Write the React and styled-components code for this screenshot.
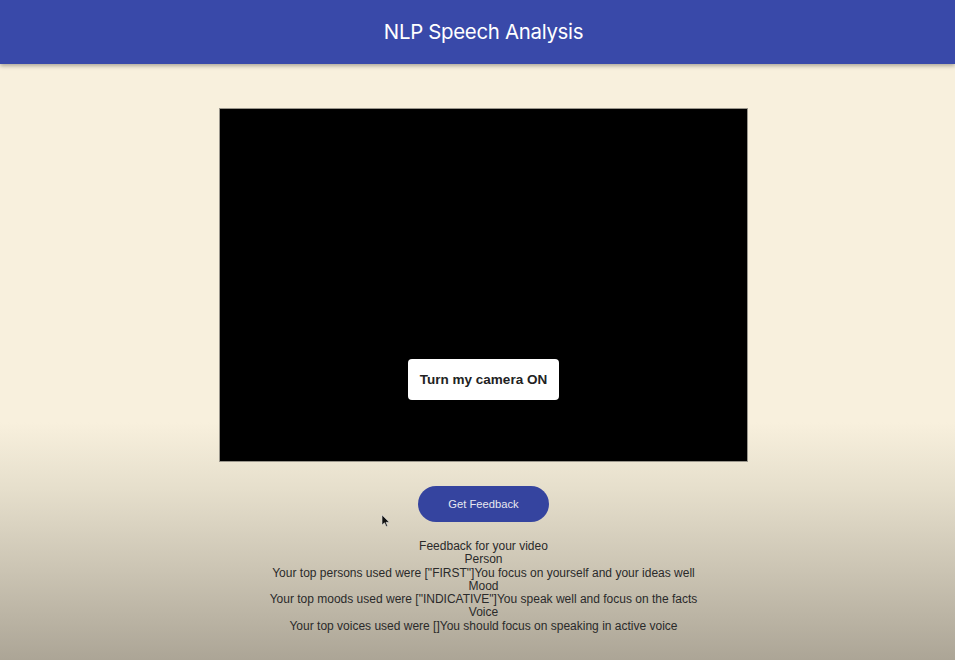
import React from "react";
import styled, { createGlobalStyle } from "styled-components";

const Global = createGlobalStyle`
  html, body { margin: 0; padding: 0; }
  body {
    font-family: "Liberation Sans", Arial, sans-serif;
    background: #f8f0dd;
  }
`;

const Page = styled.div`
  position: relative;
  min-height: 660px;
  background: linear-gradient(
    to bottom,
    #f8f0dd 0%,
    #f8f0dd 64%,
    #e6dfcc 74%,
    #ccc5b4 86%,
    #aca596 100%
  );
  display: flex;
  flex-direction: column;
`;

const Header = styled.header`
  height: 64px;
  padding-left: 12px;
  padding-bottom: 2px;
  box-sizing: border-box;
  background: #3949a9;
  box-shadow: 0 2px 4px rgba(0, 0, 0, 0.3);
  display: flex;
  align-items: center;
  justify-content: center;
`;

const Title = styled.h1`
  margin: 0;
  font-family: Inter, "Liberation Sans", sans-serif;
  font-weight: 400;
  font-size: 20.4px;
  color: #ffffff;
  letter-spacing: -0.3px;
`;

const Main = styled.main`
  display: flex;
  flex-direction: column;
  align-items: center;
  padding-top: 44px;
  padding-left: 12px;
`;

const Video = styled.div`
  width: 527px;
  height: 291px;
  background: #000;
  border: 1px solid #9a968c;
  display: flex;
  flex-direction: column;
  align-items: center;
  justify-content: flex-end;
  padding-bottom: 61px;
  box-sizing: content-box;
`;

const CameraButton = styled.button`
  width: 151px;
  height: 41px;
  background: #fff;
  border: none;
  border-radius: 4px;
  font-family: "Liberation Sans", Arial, sans-serif;
  font-weight: 700;
  font-size: 13.5px;
  color: #222;
  cursor: pointer;
`;

const FeedbackButton = styled.button`
  margin-top: 24px;
  width: 131px;
  height: 36px;
  border: none;
  border-radius: 18px;
  background: #35449f;
  color: #e8e8f0;
  font-family: "Liberation Sans", Arial, sans-serif;
  font-size: 11.2px;
  cursor: pointer;
`;

const Feedback = styled.div`
  margin-top: 18px;
  display: flex;
  flex-direction: column;
  align-items: center;
  text-align: center;
  font-family: "Liberation Sans", Arial, sans-serif;
  font-size: 12px;
  line-height: 13.3px;
  color: #2a2a2a;
`;

const Line = styled.div``;

const Cursor = styled.svg`
  position: absolute;
  left: 381px;
  top: 514px;
`;

export default function App() {
  return (
    <>
      <Global />
      <Page>
        <Header>
          <Title>NLP Speech Analysis</Title>
        </Header>
        <Main>
          <Video>
            <CameraButton>Turn my camera ON</CameraButton>
          </Video>
          <FeedbackButton>Get Feedback</FeedbackButton>
          <Feedback>
            <Line>Feedback for your video</Line>
            <Line>Person</Line>
            <Line>Your top persons used were ["FIRST"]You focus on yourself and your ideas well</Line>
            <Line>Mood</Line>
            <Line>Your top moods used were ["INDICATIVE"]You speak well and focus on the facts</Line>
            <Line>Voice</Line>
            <Line>Your top voices used were []You should focus on speaking in active voice</Line>
          </Feedback>
        </Main>
        <Cursor width="10" height="14" viewBox="0 0 10 14">
          <path d="M1 1 L1 11 L3.5 8.8 L5.2 12.5 L6.6 11.9 L5 8.3 L8.3 8.3 Z" fill="#111" stroke="#ddd" strokeWidth="0.6" />
        </Cursor>
      </Page>
    </>
  );
}
